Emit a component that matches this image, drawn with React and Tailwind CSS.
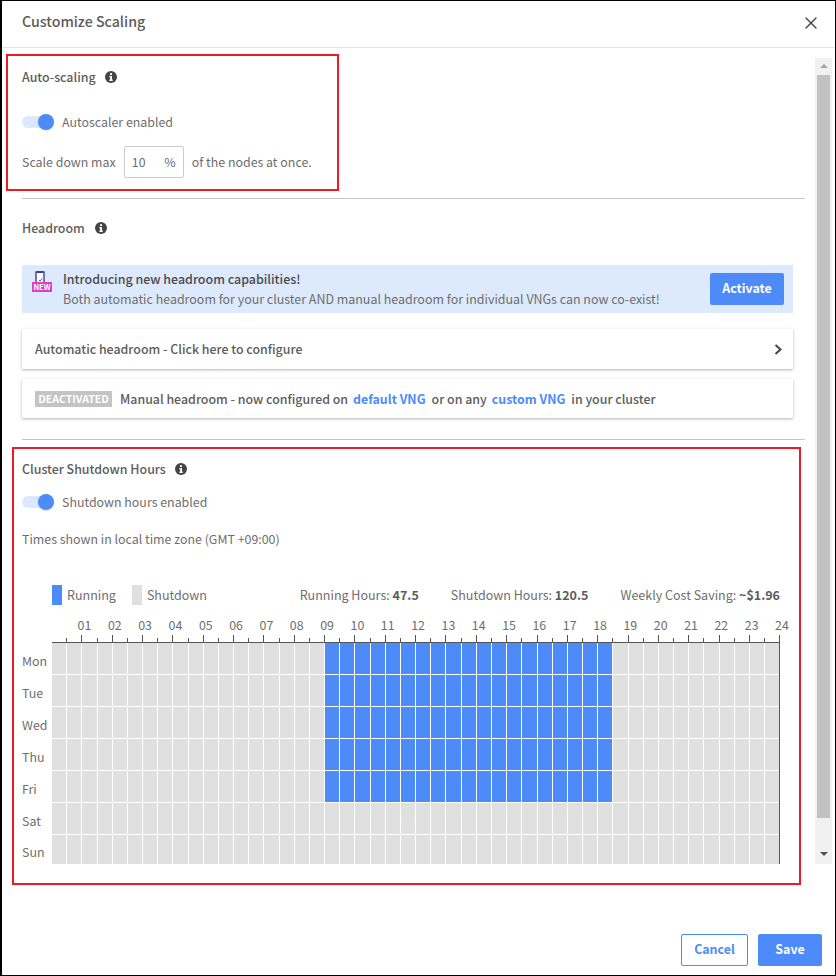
import { X } from 'lucide-react';

const hours = Array.from({ length: 24 }, (_, i) => String(i + 1).padStart(2, '0'));
const days = ['Mon', 'Tue', 'Wed', 'Thu', 'Fri', 'Sat', 'Sun'];
const slots = Array.from({ length: 48 }, (_, i) => i);

function InfoIcon() {
  return (
    <svg width="12" height="12" viewBox="0 0 12 12" className="shrink-0">
      <circle cx="6" cy="6" r="6" fill="#444" />
      <rect x="5" y="2.2" width="2" height="1.8" fill="#fff" />
      <path d="M4.4 5h2.6v3.6h.7V10H4.4V8.6h.8V6.4h-.8z" fill="#fff" />
    </svg>
  );
}

function SectionTitle({ children, gap }) {
  return (
    <div className={`flex items-center h-[18px] font-medium text-[12.4px] leading-[18px] text-[#5c5c5c] ${gap}`}>
      <span>{children}</span>
      <InfoIcon />
    </div>
  );
}

function Toggle({ label }) {
  return (
    <div className="flex items-center h-4">
      <div className="relative w-[32px] h-[12px] rounded-full bg-[#dce8fd]">
        <div className="absolute -top-[2px] right-0 w-4 h-4 rounded-full bg-[#4d8bf9] shadow-sm" />
      </div>
      <span className="ml-2 text-[12.4px] leading-[18px] text-[#6e6e6e]">{label}</span>
    </div>
  );
}

function NewIcon() {
  return (
    <div className="relative w-[20px] h-[21px] shrink-0 self-start mt-[6px]">
      <svg width="20" height="12" viewBox="0 0 20 12" className="absolute top-0 left-0">
        <path d="M4 11V1h8v10" fill="#fff" stroke="#3b3f9c" strokeWidth="1.4" />
        <rect x="5" y="0" width="6" height="2" fill="#3b3f9c" />
        <path d="M7 9l1.2 1 2-2.4" fill="none" stroke="#3b3f9c" strokeWidth="0.9" />
      </svg>
      <span className="absolute bottom-0 left-0 w-[20px] h-[10px] bg-[#de3fc6] text-white text-[7.5px] leading-[10px] font-bold text-center">NEW</span>
    </div>
  );
}

function Card({ children, className }) {
  return (
    <div className={`flex items-center w-[771px] bg-white px-[13px] shadow-[0_1px_3px_rgba(0,0,0,0.3)] rounded-[1px] text-[12.4px] leading-[18px] font-medium text-[#5c5c5c] ${className}`}>
      {children}
    </div>
  );
}

function Schedule() {
  return (
    <div className="mt-[11px]">
      {/* hour labels */}
      <div className="flex w-[728px] ml-[30px] h-[18px] text-[12.4px] leading-[18px] text-[#6e6e6e]">
        {hours.map((h) => (
          <div key={h} className="flex-1 flex justify-end">
            <span className="translate-x-[9px]">{h}</span>
          </div>
        ))}
      </div>
      {/* ticks */}
      <div className="flex items-end w-[728px] ml-[30px] h-[8px] mt-[1px] border-b border-[#555]">
        {slots.map((s) => (
          <div key={s} className="flex-1 flex justify-end items-end">
            <div className={`w-px bg-[#555] ${s % 2 ? 'h-[7px]' : 'h-[4px]'}`} />
          </div>
        ))}
      </div>
      <div className="flex">
        <div className="w-[30px] text-[12.4px] leading-[18px] text-[#6e6e6e]">
          {days.map((d, i) => (
            <div key={d} className={`flex items-center pt-[4px] ${i === 6 ? 'h-[29px]' : 'h-[32px]'}`}>{d}</div>
          ))}
        </div>
        <div className="w-[728px] border-r border-[#555]">
          {days.map((d, row) => (
            <div key={d} className={`flex gap-px ${row === 6 ? 'h-[29px]' : 'h-[32px] pb-px'}`}>
              {slots.map((s) => (
                <div key={s} className={`flex-1 ${row < 5 && s >= 18 && s < 37 ? 'bg-[#4d8bf9]' : 'bg-[#e0e0e0]'}`} />
              ))}
            </div>
          ))}
        </div>
      </div>
    </div>
  );
}

export default function App() {
  return (
    <div className="relative w-[836px] h-[976px] flex flex-col bg-white border border-black border-l-2 font-['Noto_Sans_CJK_JP','Noto_Sans',sans-serif] overflow-hidden">
      <header className="flex items-center justify-between h-[47px] shrink-0 pl-[20px] pr-[14px] pb-[2px] border-b border-[#e3e3e3]">
        <span className="mb-[2px] text-[14.2px] font-medium text-[#5c5c5c]">Customize Scaling</span>
        <X size={20} strokeWidth={1.6} className="text-[#444]" />
      </header>

      <div className="flex flex-1 min-h-0">
        <main className="w-[813px] shrink-0 pl-[20px] pt-[20px]">
          <SectionTitle gap="gap-[9px]">Auto-scaling</SectionTitle>
          <div className="mt-[28px]"><Toggle label="Autoscaler enabled" /></div>
          <div className="flex items-center mt-[16px] text-[12.4px] leading-[18px] text-[#6e6e6e]">
            <span>Scale down max</span>
            <div className="flex items-center justify-between w-[60px] h-[32px] ml-2 pl-[7px] pr-[7px] border border-[#ccc] rounded-[2px]">
              <span>10</span>
              <span>%</span>
            </div>
            <span className="ml-2">of the nodes at once.</span>
          </div>
          <div className="w-[783px] h-px bg-[#c6c6c6] mt-[20px]" />

          <div className="mt-[20px]"><SectionTitle gap="gap-[10px]">Headroom</SectionTitle></div>

          <div className="flex items-center w-[771px] h-[48px] mt-[28px] pl-[10px] pr-[9px] bg-[#dde9fc]">
            <NewIcon />
            <div className="ml-[11px] flex-1 text-[12.45px] leading-[20px]">
              <div className="font-medium text-[#4a4a4a]">Introducing new headroom capabilities!</div>
              <div className="text-[#6e6e6e]">Both automatic headroom for your cluster AND manual headroom for individual VNGs can now co-exist!</div>
            </div>
            <button className="w-[74px] h-[32px] pb-[2px] rounded-[2px] bg-[#4d8bf9] text-white text-[12.4px] font-bold">Activate</button>
          </div>

          <Card className="h-[40px] mt-[16px] justify-between">
            <span>Automatic headroom - Click here to configure</span>
            <svg width="8" height="11" viewBox="0 0 8 11" className="-mr-[2px]">
              <path d="M1.5 1L6.5 5.5L1.5 10" fill="none" stroke="#444" strokeWidth="2" />
            </svg>
          </Card>

          <Card className="h-[39px] mt-[10px]">
            <span className="w-[77px] h-[16px] bg-[#c4c4c4] text-white text-[10.6px] leading-[16px] font-bold text-center">DEACTIVATED</span>
            <span className="ml-2">Manual headroom - now configured on</span>
            <span className="ml-[5px] font-bold text-[#4d8bf9]">default VNG</span>
            <span className="ml-[6px]">or on any</span>
            <span className="ml-[5px] font-bold text-[#4d8bf9]">custom VNG</span>
            <span className="ml-[6px]">in your cluster</span>
          </Card>

          <div className="w-[783px] h-px bg-[#c6c6c6] mt-[21px]" />

          <div className="mt-[20px]"><SectionTitle gap="gap-[9px]">Cluster Shutdown Hours</SectionTitle></div>
          <div className="mt-[16px]"><Toggle label="Shutdown hours enabled" /></div>
          <div className="mt-[20px] text-[12.4px] leading-[18px] text-[#6e6e6e]">Times shown in local time zone (GMT +09:00)</div>

          <div className="flex items-center w-[758px] h-[20px] mt-[37px] text-[12.5px] leading-[18px] text-[#6e6e6e] whitespace-nowrap">
            <div className="w-[10px] h-[20px] ml-[30px] bg-[#4d8bf9]" />
            <span className="ml-[5px]">Running</span>
            <div className="w-[10px] h-[20px] ml-[16px] bg-[#e0e0e0]" />
            <span className="ml-[5px]">Shutdown</span>
            <div className="flex gap-[32px] ml-auto">
              <span>Running Hours: <b className="font-bold text-[#5c5c5c]">47.5</b></span>
              <span>Shutdown Hours: <b className="font-bold text-[#5c5c5c]">120.5</b></span>
              <span>Weekly Cost Saving: <b className="font-bold text-[#5c5c5c]">~$1.96</b></span>
            </div>
          </div>

          <Schedule />
        </main>

        {/* scrollbar */}
        <div className="flex flex-col items-center w-[17px] h-[806px] mt-[10px] py-[6px] bg-[#f1f1f1]">
          <div className="w-0 h-0 border-x-[4px] border-x-transparent border-b-[4px] border-b-[#a3a3a3]" />
          <div className="w-[13px] h-[743px] mt-[7px] bg-[#c1c1c1]" />
          <div className="w-0 h-0 mt-[34px] border-x-[4px] border-x-transparent border-t-[4px] border-t-[#505050]" />
        </div>
      </div>

      <footer className="flex justify-end gap-[10px] shrink-0 pr-[13px] pb-[9px]">
        <button className="w-[67px] h-[32px] pb-[2px] rounded-[2px] border border-[#4d8bf9] bg-white text-[#4d8bf9] text-[12.4px] font-bold">Cancel</button>
        <button className="w-[64px] h-[32px] pb-[2px] rounded-[2px] bg-[#4d8bf9] text-white text-[12.4px] font-bold">Save</button>
      </footer>

      {/* red annotation boxes */}
      <div className="absolute left-[4px] top-[53px] w-[333px] h-[137px] border-2 border-[#ed1c24]" />
      <div className="absolute left-[10px] top-[446px] w-[789px] h-[438px] border-2 border-[#ed1c24]" />
    </div>
  );
}
